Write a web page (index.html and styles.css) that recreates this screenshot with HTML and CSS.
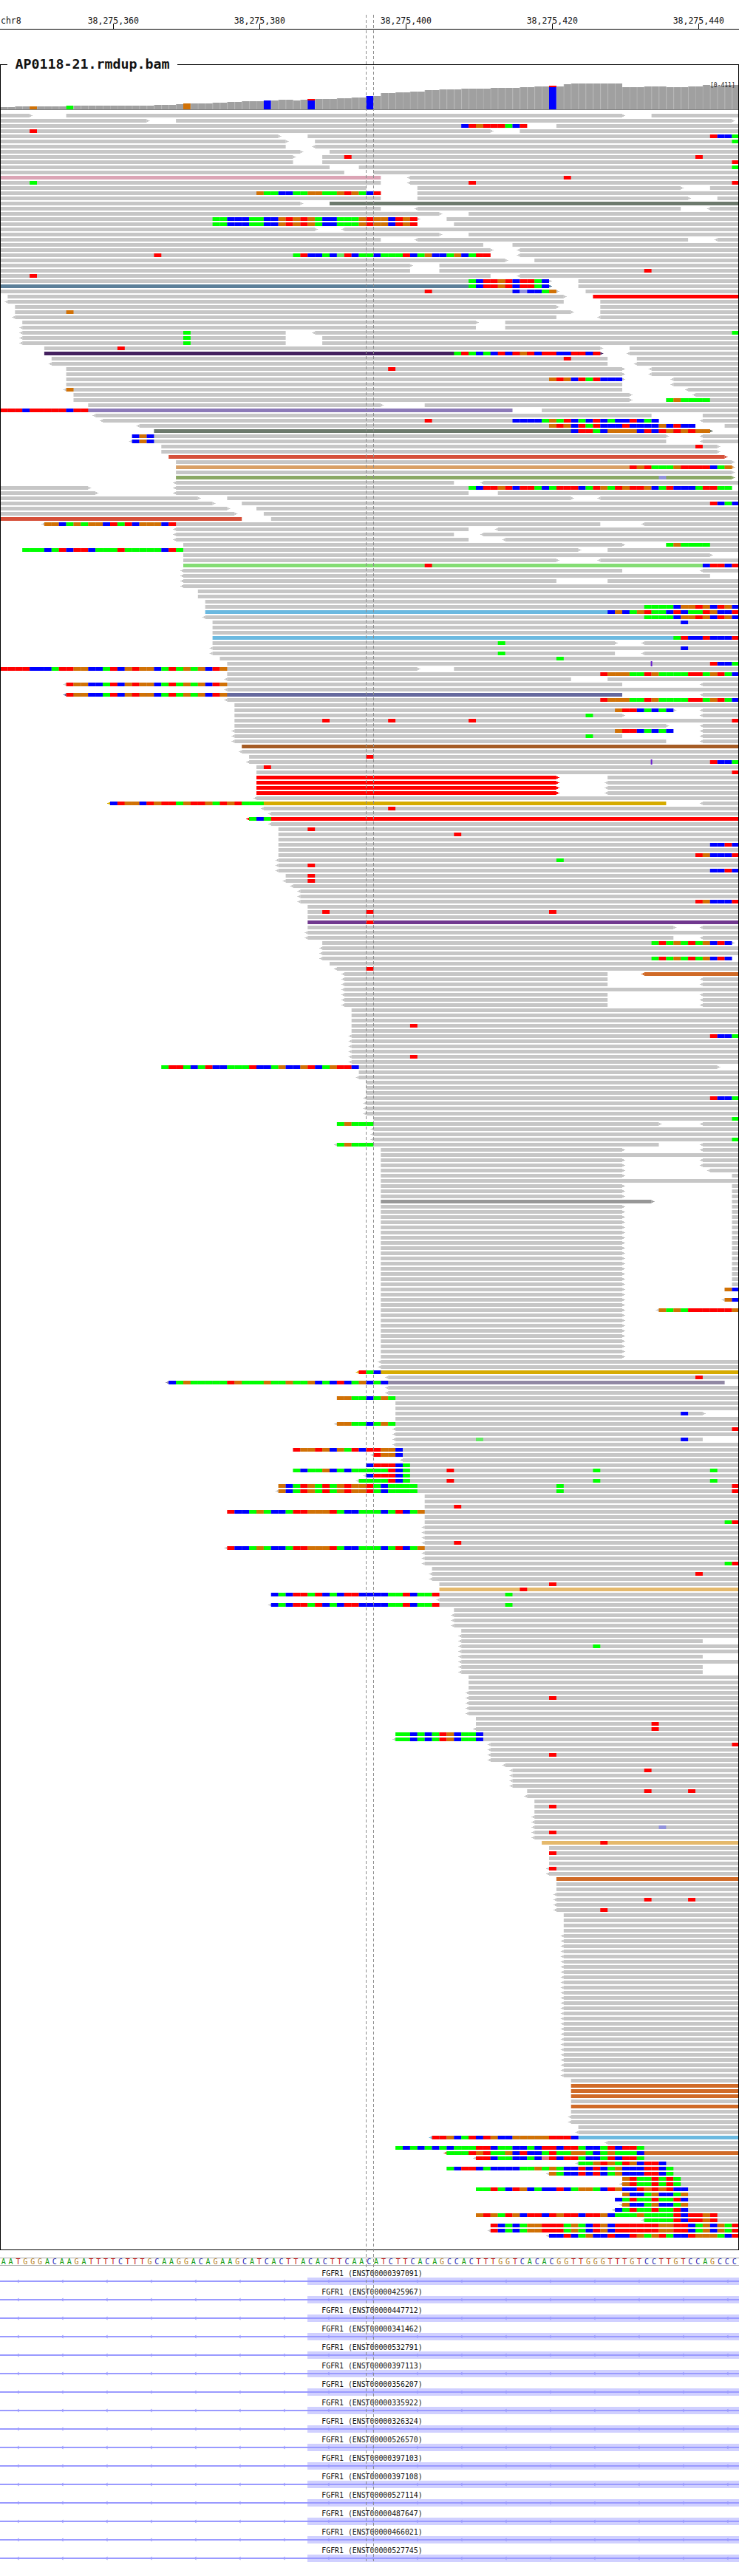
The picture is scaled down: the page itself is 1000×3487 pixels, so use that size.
FILE: index.html
```html
<!DOCTYPE html>
<html>
<head>
	<meta charset="UTF-8">
	<title>AP0118-21.rmdup.bam</title>
	<link rel="stylesheet" href="styles.css">
</head>
<body>
	<div class="page">
		<div class="ruler">
			<div class="chr">chr8</div>
			<div class="tick">38,275,360</div>
			<div class="tick">38,275,380</div>
			<div class="tick">38,275,400</div>
			<div class="tick">38,275,420</div>
			<div class="tick">38,275,440</div>
		</div>

		<section class="track">
			<h2 class="track-title">AP0118-21.rmdup.bam</h2>
			<svg id="pileup" class="pileup" viewBox="1 88 998 2957" width="998" height="2957"></svg>
		</section>

		<div id="sequence" class="sequence"></div>

		<svg class="defs" width="0" height="0">
			<symbol id="transcript" viewBox="0 0 1000 10">
				<rect class="exon" x="416" y="0" width="584" height="10"></rect>
				<rect class="intron" x="0" y="4" width="1000" height="2"></rect>
				<path class="intron" d="M22.5 5l3-2.5v5zM82.5 5l3-2.5v5zM142.5 5l3-2.5v5zM202.5 5l3-2.5v5zM262.5 5l3-2.5v5zM322.5 5l3-2.5v5zM382.5 5l3-2.5v5zM442.5 5l3-2.5v5zM502.5 5l3-2.5v5zM562.5 5l3-2.5v5zM622.5 5l3-2.5v5zM682.5 5l3-2.5v5zM742.5 5l3-2.5v5zM802.5 5l3-2.5v5zM862.5 5l3-2.5v5zM922.5 5l3-2.5v5zM982.5 5l3-2.5v5z"></path>
			</symbol>
		</svg>

		<div class="genes">
			<div class="gene"><div class="gene-label">FGFR1 (ENST00000397091)</div><svg class="gene-bar"><use href="#transcript"></use></svg></div>
			<div class="gene"><div class="gene-label">FGFR1 (ENST00000425967)</div><svg class="gene-bar"><use href="#transcript"></use></svg></div>
			<div class="gene"><div class="gene-label">FGFR1 (ENST00000447712)</div><svg class="gene-bar"><use href="#transcript"></use></svg></div>
			<div class="gene"><div class="gene-label">FGFR1 (ENST00000341462)</div><svg class="gene-bar"><use href="#transcript"></use></svg></div>
			<div class="gene"><div class="gene-label">FGFR1 (ENST00000532791)</div><svg class="gene-bar"><use href="#transcript"></use></svg></div>
			<div class="gene"><div class="gene-label">FGFR1 (ENST00000397113)</div><svg class="gene-bar"><use href="#transcript"></use></svg></div>
			<div class="gene"><div class="gene-label">FGFR1 (ENST00000356207)</div><svg class="gene-bar"><use href="#transcript"></use></svg></div>
			<div class="gene"><div class="gene-label">FGFR1 (ENST00000335922)</div><svg class="gene-bar"><use href="#transcript"></use></svg></div>
			<div class="gene"><div class="gene-label">FGFR1 (ENST00000326324)</div><svg class="gene-bar"><use href="#transcript"></use></svg></div>
			<div class="gene"><div class="gene-label">FGFR1 (ENST00000526570)</div><svg class="gene-bar"><use href="#transcript"></use></svg></div>
			<div class="gene"><div class="gene-label">FGFR1 (ENST00000397103)</div><svg class="gene-bar"><use href="#transcript"></use></svg></div>
			<div class="gene"><div class="gene-label">FGFR1 (ENST00000397108)</div><svg class="gene-bar"><use href="#transcript"></use></svg></div>
			<div class="gene"><div class="gene-label">FGFR1 (ENST00000527114)</div><svg class="gene-bar"><use href="#transcript"></use></svg></div>
			<div class="gene"><div class="gene-label">FGFR1 (ENST00000487647)</div><svg class="gene-bar"><use href="#transcript"></use></svg></div>
			<div class="gene"><div class="gene-label">FGFR1 (ENST00000466021)</div><svg class="gene-bar"><use href="#transcript"></use></svg></div>
			<div class="gene"><div class="gene-label">FGFR1 (ENST00000527745)</div><svg class="gene-bar"><use href="#transcript"></use></svg></div>
		</div>

		<div class="guide guide-left"></div>
		<div class="guide guide-right"></div>
	</div>

	<script src="app.js"></script>
</body>
</html>
```

FILE: styles.css
```css
body {
	margin: 0;
	background: #fff;
	color: #111;
	font-family: "DejaVu Sans Mono", "Liberation Mono", monospace;
}
.page {
	position: relative;
	width: 1000px;
	height: 3487px;
	overflow: hidden;
}

/* ruler */
.ruler {
	display: flex;
	height: 39px;
	border-bottom: 1px solid #000;
	overflow: hidden;
	font-size: 11.5px;
	line-height: 14px;
}
.chr {
	flex: 0 0 54.3px;
	padding: 21px 0 0 1px;
	box-sizing: border-box;
}
.tick {
	flex: 0 0 198px;
	position: relative;
	padding-top: 21px;
	text-align: center;
}
.tick::after {
	content: "";
	position: absolute;
	left: 99px;
	bottom: 0;
	width: 1px;
	height: 7px;
	background: #000;
}

/* alignment track */
.track {
	position: relative;
	box-sizing: border-box;
	height: 2959px;
	margin-top: 47px;
	border: 1px solid #000;
}
.track-title {
	position: absolute;
	left: 9px;
	top: -12px;
	margin: 0;
	padding: 0 10.5px;
	background: #fff;
	font-size: 18.3px;
	line-height: 22px;
	font-weight: bold;
}
.pileup {
	display: block;
}
.cov-gap { fill: #aeaeae; }
.cov-bar { fill: #a0a0a0; }
.cov-base { fill: #808080; }
.cov-range {
	font-size: 8px;
	fill: #222;
}

.read { fill: #c6c6c6; }
.r { fill: #ff0000; }
.g { fill: #00ff00; }
.b { fill: #0000ff; }
.o { fill: #d17105; }
.p { fill: #9292dc; }
.l { fill: #62e862; }
.k { fill: #e07080; }
.i { fill: #6a1fd0; }

.pink { fill: #dba4b5; }
.slate { fill: #6d7a6d; }
.steel { fill: #5b7f99; }
.plum { fill: #44215f; }
.lav { fill: #8c7ab8; }
.brick { fill: #d6503a; }
.tan { fill: #d9a066; }
.olive { fill: #8aa864; }
.mint { fill: #84dd74; }
.sky { fill: #6bb9e0; }
.indigo { fill: #65699e; }
.brown { fill: #a55c25; }
.gold { fill: #d6ab00; }
.purple { fill: #71388f; }
.rust { fill: #d06a27; }
.mauve { fill: #9188a4; }
.sand { fill: #e5b96c; }
.dark { fill: #979797; }

/* reference sequence */
.sequence {
	display: grid;
	grid-template-columns: repeat(101, 9.9px);
	box-sizing: border-box;
	height: 11px;
	margin: 10px 0 0 -0.3px;
	border-top: 1px solid #aaa;
	border-bottom: 1px solid #aaa;
	font-size: 10px;
	line-height: 9px;
	text-align: center;
}
.base-A { color: #0a9a0a; }
.base-C { color: #1e1eb4; }
.base-G { color: #b8801c; }
.base-T { color: #c81414; }

/* gene track */
.defs {
	display: block;
	height: 0;
}
.genes {
	margin-top: 5px;
}
.gene {
	height: 25px;
}
.gene-label {
	height: 11px;
	padding-left: 7px;
	font-size: 9.85px;
	line-height: 11px;
	text-align: center;
}
.gene-bar {
	display: block;
	width: 1000px;
	height: 10px;
}
.exon { fill: #d0d0ff; }
.intron { fill: #9a9aff; }

/* center lines, drawn over everything */
.guide {
	position: absolute;
	top: 20px;
	bottom: 20px;
	width: 1px;
	background: repeating-linear-gradient(#8c8c8c 0 4px, transparent 4px 7px);
}
.guide-left { left: 495px; }
.guide-right { left: 505px; }
```

FILE: app.js
```js
// reference bases, one per column
var BASES = 'AATGGGACAAGATTTTCTTTGCAAGGACAGAAGCATCACTTACACTTCAACATCTTCACAGCCACTTTGGTCACACGGTTGGGTTTGTCCTTGTCCAGCCC';

// coverage height per column in px
var COVERAGE = [3,3,4,4,4,4,4,4,4,5,5,5,5,5,5,5,5,5,5,5,5,6,6,6,7,8,8,8,8,9,9,10,10,11,11,11,12,12,13,13,12,13,14,14,14,14,15,15,16,16,18,18,22,22,23,23,24,24,26,26,27,27,27,28,28,28,28,29,29,29,29,30,30,31,31,32,31,34,35,35,35,35,35,35,35,30,30,30,31,31,31,30,30,30,31,31,33,32,32,33,33];
var COVERAGE_MARKS = {4: 'o', 9: 'g', 25: 'o', 36: 'b', 42: 'b', 50: 'b', 75: 'b'};

var COL_WIDTH = 9.9;
var ROW_TOP = 154;
var ROW_PITCH = 7;
var READ_HEIGHT = 5;

// one string per pileup row: reads split by a space
// read = [<]start[-end][>][~fill][,col=bases...]  end defaults to the last column
// "*n" at the end repeats the row n times
var ROWS = [
	'0-4> 9-85> 89', '0-20> 24-100>', '0-72,63=brorrrgbr 76', '0-67>,4=r 71', '0-38> 42,97=rbbg',
	'0-39> 43,100=g', '0-39 <43', '0-41> 45', '0-40> 44,47=r,95=r', '0-40 44,100=r',
	'0-45 49,100=g', '0-47 51', '0-52~pink <56,77=r', '0-52,4=g <56,64=r,100=r', '0-50 57-93> 97',
	// 15
	'0-52,35=oggbbggooggorogbr 57', '0-52 57-94> 98', '0-41> 45~slate', '0-52 <57-93 <97', '0-60> 64',
	'0-57>,29=ggbbbggbbororogbbgggoroobror 61', '0-57,29=ggbbbggbbororogbbgggoroobror 62', '0-43> <47', '0-60> 64', '0-52 <57-94 <98',
	'0-66 70', '0-67> <71', '0-67,21=r,40=grbbgblrbggbgggrbgobbgobgrr <71', '0-69> 73', '0-56> 60',
	'0-56 60,88=r', '0-67,4=r <71', '0-75>,64=gbrrorbrrgb 79', '0-75>~steel,64=gbrrorbrrgb 79', '0-76>,58=r,70=bpbbgo 80',
	// 35
	'1-77> 81~red', '<1-77 82', '2-76> 82', '2-78>,9=o 82', '<2-76 <82',
	'3-65> 69', '<3-65 69', '<3-39,25=g <43,100=g', '<3-39,25=g 44', '<3-39,25=g 44',
	'6-82>,16=r 86', '6-82>~plum,62=grgbgbrbrorbrrbbrrbr <86', '7-83,77=r 87', '<7-83 <87', '9-85>,53=r <89',
	'9-85> <89', '9-85>,75=orobrgrbbb <92', '9-85 <92', '<9-85,9=o <94', '10-86> <95',
	'10-86> 91,91=gogggg', '12-52> 58', '0-70~lav,0=rrrbrrrrrbrr 74', '<13-89 96', '<14-90,58=r,70=bbbbgogrbgbrbgbbrbgb <96',
	// 60
	'<19-95,75=orobrgrbbbrbbbbobrbb 99', '21-97>~slate,78=brrgboooobrbrororoo', '18-91>,18=bob <96', '<18-91,18=bob <96', '22-98>,95=r',
	'22-98>', '23-99>~brick', '24-100>', '24-100>~tan,86=rorgggorrrrbgo', '24-100>',
	'24-100>~olive,90=p', '<24-62 <66', '0-12> <24-100,64=gbrrorbrrgbgrrrbgrogrorrobgrbbbgrrgg', '0-13> <24-64 68', '0-27> 31-78> <82',
	'0-29> 33,97=rbgb', '0-31> 35', '0-32> 36', '0-33~brick 37', '<6-82,6=oobgogoobrgrbooobr <88',
	// 80
	'<24-64 <68', '<24-62 <66', '<24-64 <69', '25-85> 91,91=gogggg', '3-79>,3=gggbgrbrrbgggrgggggbrg 83',
	'25-97>', '25-76> <82', '25~mint,58=r,96=brrbr', '<25-85 <96', '<25-97',
	'<25-76 83', '<25', '27', '27', '28',
	'28,88=ggggboorobrob', '28~sky,83=bobgorggbrbggrobbr', '<28,88=ggggboorobrob', '29,93=b', '29',
	// 100
	'29', '29~sky,92=grbbrbbbr', '29-84>,68=g <88', '<29,93=b', '<29-84,68=g <88',
	'30,76=g', '31,89=i,97=rbbg', '0-57>,0=rrrrbbbgrroobbgrboroobgrgogobro 62', '31,82=roooggroggggrrgorgb', '<31-78 83',
	'<9-85,9=roobbgrboroobgrgogobro <96', '<31', '<9-85~indigo,9=roobbgrboroobgrgogobro <96', '<31,82=roooggroggggrrgorgb', '32',
	'32-92>,84=orrbgbgb <96', '32-85>,80=g <96', '32,44=r,53=r,64=r,100=r', '32-91> <96', '<32-92,84=orrbgbgb <96',
	// 120
	'<32-85,80=g <96', '<32-91 <96', '33~brown', '<33', '34,50=r',
	'<34,89=i,97=rbbg', '35,36=r', '35,100=r', '35-76>~red 83', '35-76>~red <83',
	'35-76>~red <83', '35-76>~red <83', '<35', '<15-91~gold,15=broobrorrgorrogrorggg <96',
	'<36,53=r', '<37', '<34~red,34=gbg', '<37', '38,42=r', '38,62=r',
	// 140
	'38', '38,97=bbrb', '38', '38,95=robbbr', '<38,76=g',
	'<38,42=r', '<38,97=bbrb', '39,42=r', '<39,42=r', '<40',
	'<41', '<41', '<41,95=robbbr', '42', '42,44=r,50=r,75=r',
	'42', '42~purple,50=r', '42-92> <96', '<42', '<42-92 <96',
	// 160
	'44-100>,89=grgogrgobrb', '<44', '<44', '<44-100,89=grgogrgobrb', '45',
	'<46,50=r', '<47-83 <88~rust', '<47-83 <96', '<47-83 <96', '<47',
	'<47-83 <96', '<47-83 <96', '<47-83 <96', '48', '48',
	'48', '48,56=r', '48', '<48,97=rbbg', '<48',
	// 180
	'<48', '<48', '<48,56=r', '<48', '22-98>,22=grrgbgrbbgggrbbgobborbgorrb',
	'49', '<49', '50', '50', '50',
	'<50,97=rbbg', '<50', '<50', '<50', '51,100=g',
	'46-90>,46=goggg <96', '<51', '<51', '<51,100=g', '<46-90,46=goggg <96',
	// 200
	'52-85> <96', '52', '52-85> <96', '52-85> <96', '52-85> <97',
	'52-85> 100', '52', '52-85> 100', '52-85> 100', '52-85> 100',
	'52-89>~dark 100', '52-85> 100 *16', '52-85> 99,99=ob', '52-85>', '52-85> <99,99=ob',
	'52-85>', '52-85> <90,90=ogogrrrrrro', '52-85> *9', '<52', '<52',
	'<49~gold,49=rgb', '<53,95=r', '<23-99~mauve,23=bgogggggrogggoggoggobgbrbgobgb', '<53', '<53',
	// 248
	'46,46=ooggbgog', '54', '54', '54-96>,93=b', '54',
	'<46,46=ooggbgog', '<54,100=r', '<54', '<54-96,65=l,93=b', '<54',
	'40,40=roorobogrbrroob', '<51,51=roob', '<55', '50,50=brrrbg', '40,40=gbggobgbgggggrbg,61=r,81=g,97=g',
	'<50,50=brrrbg', '<49,49=ggggrbg,61=r,81=g,97=g', '38,38=obgrogrgoroorgbgggg,76=g,100=r', '<38,38=obgrogrgoroorgbgggg,76=g,100=r', '58',
	// 268
	'58', '58,62=r', '31,31=rbbgogbbgrrooorgbbgggbgrbgo', '58', '58,99=gr',
	'<58', '<58', '<58', '<58,62=r', '<31,31=rbbgogbbgrrooorgbbgggbgrbgo',
	'<58', '<58', '<58,99=gr', '59', '<59,95=r',
	'<59', '60,75=r', '60~sand,71=r', '37,37=bgbrrgrbgbrrbbbbggrbggr,69=g', '<60',
	// 288
	'<37,37=bgbrrgrbgbrrbbbbggrbggr,69=g', '62', '<62', '<62', '<62',
	'63', '<63', '<63-96', '<63,81=g', '<63',
	'<63-96', '<63', '<63-96', '<63-96', '64',
	'64', '64', '<64', '<64,75=r', '<64',
	// 308
	'<64', '<64', '65', '65,89=r', '<65,89=r',
	'54,54=ggbgbgrobggb', '<54,54=ggbgbgrobggb', '<67,100=r', '<67', '<67,75=r',
	'<67', '<69', '<70,88=r', '<70', '<70',
	'<70', '72,88=r,94=r', '<72', '73', '73,75=r',
	// 328
	'73', '<73', '<73', '<73,90=p', '<73,75=r',
	'<73', '74~sand,82=r', '75', '75,75=r', '75',
	'75', '<75,75=r', '<75', '76~rust', '76',
	'76', '<76', '<76,88=r,94=r', '<76', '<76,82=r',
	// 348
	'77', '77', '77', '77', '<77 *28',
	'78', '78~rust', '78~rust', '78~rust', '78',
	'78~rust', '78', '<78', '<78', '79',
	'<79', '<59~sky,59=rrobgrbrobbooooorrrb', '<83',
	// 393
	'54,54=gbgbgbgbgggrrbggbbgbrrbrrgbbgrbrrg', '<61~rust,61=gggrorggobrbbgrggoogbgogggb',
	'<65,65=rrbggbbgbkrbrrgbbgrbrrg', '<79,79=ggorogrobrrb', '61,61=gbrrbgbbbbggogogbbrbrbgobbbrrbg',
	'<75,75=ogbbrbrbgobbbrrbg', '85,85=orggrgrg', '<85,85=orggrgrg',
	'65,65=ggrgbrobgbbrbgoogbrobbrororbb', '85,85=obbgobbgo', '84,84=bgrggrggrb', '<85,85=obbgobbgo', '<84,84=bgrggrggrb',
	'65,65=orogrobrrbrorrbrrobgggoggggrbrror', '<88,88=ggggrbrror',
	'67,67=rbgbgoorrrgogbrobrrrrrroorrbgobogr', '<67,67=rbgbgoorrrgogbrobrrrrrroorrbgobogr',
	'<75,75=bbrbgobbrbbrogorgbbrooogbr'
];

function colX(col) {
	return 0.5 + col * COL_WIDTH;
}

function rect(cls, x, y, w, h) {
	return '<rect class="' + cls + '" x="' + x.toFixed(1) + '" y="' + y + '" width="' + w.toFixed(1) + '" height="' + h + '"></rect>';
}

function drawCoverage() {
	var out = '';
	for (var i = 0; i < COVERAGE.length; i++) {
		var h = COVERAGE[i];
		var x = colX(i);
		var mark = COVERAGE_MARKS[i];
		if (mark) {
			out += rect(mark, x, 148 - h, COL_WIDTH, h);
			// the tall mixed columns have a red cap
			if (i === 42 || i === 75) out += rect('r', x, 148 - h, COL_WIDTH, 2);
		} else {
			out += rect('cov-gap', x, 148 - h, COL_WIDTH, h);
			out += rect('cov-bar', x + 1, 148 - h, COL_WIDTH - 1, h);
		}
	}
	out += rect('cov-base', 0, 148, 1000, 1);
	out += '<text class="cov-range" x="961" y="118">[0-411]</text>';
	return out;
}

function drawRead(token, y) {
	var m = token.match(/^(<?)(\d+)(?:-(\d+))?(>?)(?:~(\w+))?(.*)$/);
	var start = parseInt(m[2], 10);
	var end = m[3] ? parseInt(m[3], 10) : 101;
	var fill = m[5] === 'red' ? 'r' : (m[5] || 'read');
	var x1 = colX(start);
	var x2 = Math.min(colX(end), 1000);
	var out = rect(fill, x1, y, x2 - x1, READ_HEIGHT);

	// strand arrows stick out of the read end
	if (m[1]) {
		out += rect(fill, x1 - 2, y + 1, 2, 3) + rect(fill, x1 - 4, y + 2, 2, 1);
	}
	if (m[4]) {
		out += rect(fill, x2, y + 1, 2, 3) + rect(fill, x2 + 2, y + 2, 2, 1);
	}

	var marks = m[6].split(',');
	for (var i = 1; i < marks.length; i++) {
		var parts = marks[i].split('=');
		var col = parseInt(parts[0], 10);
		var bases = parts[1];
		for (var j = 0; j < bases.length; j++) {
			var x = colX(col + j);
			if (bases[j] === 'i') {
				out += rect('i', x - 1, y - 1, 2, READ_HEIGHT + 2);
			} else {
				out += rect(bases[j], x, y, COL_WIDTH, READ_HEIGHT);
			}
		}
	}
	return out;
}

function drawReads() {
	var out = '';
	var row = 0;
	for (var i = 0; i < ROWS.length; i++) {
		var tokens = ROWS[i].split(' ');
		var repeat = 1;
		if (tokens[tokens.length - 1].charAt(0) === '*') {
			repeat = parseInt(tokens.pop().slice(1), 10);
		}
		for (var n = 0; n < repeat; n++) {
			var y = ROW_TOP + row * ROW_PITCH;
			for (var t = 0; t < tokens.length; t++) {
				out += drawRead(tokens[t], y);
			}
			row++;
		}
	}
	return out;
}

function drawSequence() {
	var out = '';
	for (var i = 0; i < BASES.length; i++) {
		out += '<span class="base-' + BASES[i] + '">' + BASES[i] + '</span>';
	}
	return out;
}

document.getElementById('pileup').innerHTML = drawCoverage() + drawReads();
document.getElementById('sequence').innerHTML = drawSequence();
```
